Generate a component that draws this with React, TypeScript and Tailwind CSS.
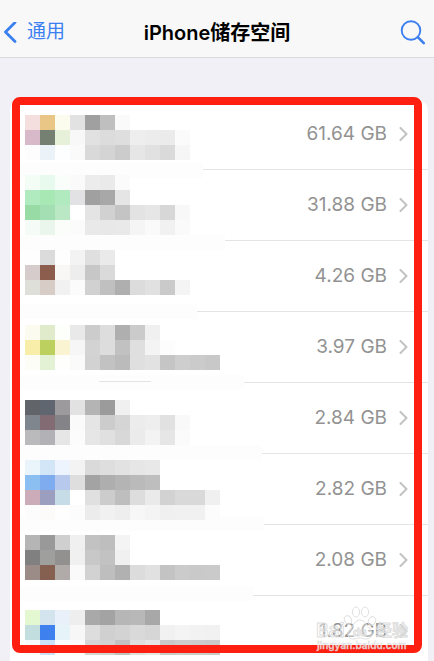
const apps = [
  { id: 1, size: '61.64 GB' },
  { id: 2, size: '31.88 GB' },
  { id: 3, size: '4.26 GB' },
  { id: 4, size: '3.97 GB' },
  { id: 5, size: '2.84 GB' },
  { id: 6, size: '2.82 GB' },
  { id: 7, size: '2.08 GB' },
  { id: 8, size: '1.82 GB' },
]

// size of one mosaic block
const CELL = 15

// line = index of the block line counted from the top of the list
const mosaic = [
  { line: 0, colors: '#f5dede #e9c686 #fbfbee #e2e2e2 #a0a0a0 #bfbfbf #fafafa' },
  { line: 1, colors: '#d8b9ca #758072 #e7f1d9 #f8f8f8 #e1e1e1 #dcdcdc #dedede #eeeeee #ececec #ebebeb #fbfbfb' },
  { line: 2, colors: '#fdfdfd #ebf2f8 #fdfeff #fafafa #d9d9d9 #d4d4d4 #cccccc #e6e6e6 #e1e1e1 #dadada #f6f6f6' },
  { line: 4, colors: '#f4fcf6 #e8f9ee #f9fefa #fafafa #ececec #eaeaea #fbfbfb' },
  { line: 5, colors: '#b0eabf #a7e8b4 #b1eabe #e2e2e4 #a0a0a0 #a8a8a8 #e5e5e5' },
  { line: 6, colors: '#99dba5 #a4deb3 #bbe8c4 #ffffff #e4e4e4 #d1d1d1 #c4c4c4 #e3e3e3 #e6e6e6 #d7d7d7 #f8f8f8' },
  { line: 7, colors: '#f5fbf6 #eaf6ec #fafdfa #fbfbfb #e9e9e9 #e8e8e8 #e9e9e9 #f5f5f5 #fafafa #f1f1f1 #fafafa' },
  { line: 9, colors: '#fefefe #dbdbdb #fefefe #f3f3f3 #dfdfdf #eaeaea' },
  { line: 10, colors: '#d6cccc #8c5c4c #f8f7f5 #ededed #c7c7c7 #dadada' },
  { line: 11, colors: '#dfdfda #d8cdc6 #f1f1f1 #fbfbfb #d1d1d1 #c0c0c0 #afafaf #dcdcdc #e1e1e1 #cacaca #f4f4f4' },
  { line: 14, colors: '#fcfbef #dfebcb #fdfffa #e9e9e9 #cccccc #dddddd #afafaf #cbcbcb #f0f0f0' },
  { line: 15, colors: '#f9eea9 #bbd05e #fbf4d3 #f6f6f6 #d3d3d3 #dddddd #c1c1c1 #dfdfdf #f4f4f4 #fdfdfd' },
  { line: 16, colors: '#fcfdf7 #e3f1d4 #fefefd #fafafa #d2d2d2 #c2c2c2 #bbbbbb #dfdfdf #e2e2e2 #c5c5c5 #cecece #cbcbcb #c8c8c8' },
  { line: 19, colors: '#616468 #5f666f #9d9a9e #e2e2e2 #b4b4b4 #9b9b9b #f0f0f0' },
  { line: 20, colors: '#7f868e #836b74 #848388 #fafafa #e5e5e5 #cccccc #d5d5d5 #ececec #eeeeee #e1e1e1 #f9f9f9' },
  { line: 21, colors: '#bababc #b2b1b6 #e6e6e6 #fcfcfc #e6e6e6 #e0e0e0 #d8d8d8 #ebebeb #f3f3f3 #e6e6e6 #fbfbfb' },
  { line: 23, colors: '#e9f4fb #d2e6f8 #eef4fd #f3f3f3 #dadada #dedede #e2e2e2 #e6e6e6 #e8e8e8' },
  { line: 24, colors: '#8bbff2 #7eacef #b7c9ec #dedede #a3a3a3 #aeaeae #b4b4b4 #bababa #bebebe' },
  { line: 25, colors: '#cbacb8 #9b9ebf #c6dde7 #ffffff #e0e0e0 #cccccc #bebebe #dddddd #eaeaea #d2d2d2 #d9d9d9 #d9d9d9 #f0f0f0' },
  { line: 26, colors: '#fcfcfc #fcfbfa #fefefe #fcfcfc #ececec #f1f1f1 #eeeeee #f7f7f7 #f4f4f4 #f0f0f0 #f1f1f1 #f1f1f1 #fcfcfc' },
  { line: 28, colors: '#b5b5b5 #999999 #cfcfcf #f0f0f0 #c2c2c2 #bebebe #f4f4f4' },
  { line: 29, colors: '#808080 #9f9f9d #92918f #f0f0f0 #c8c8c8 #c2c2c2 #f0f0f0' },
  { line: 30, colors: '#9b8c88 #855f50 #b0aba8 #fafafa #d2d2d2 #bebebe #b1b1b1 #dcdcdc #e1e1e1 #c3c3c3 #cbcbcb #c9c9c9 #cacaca' },
  { line: 33, colors: '#e3f7d0 #d3e4ef #e9f0f9 #eeeeee #a9a9a9 #a3a3a3 #b6b6b6 #b8b8b8 #a8a8a8' },
  { line: 34, colors: '#c3dedf #3d80ee #e6f3f8 #f7f7f7 #dddddd #d0d0d0 #d3d3d3 #d9d9d9 #d6d6d6 #f1f1f1 #f4f4f4 #f2f2f2 #f1f1f1' },
  { line: 35, colors: '#f8fbfc #cbe1f8 #fafcfd #fbfbfb #d5d5d5 #d2d2d2 #c2c2c2 #dfdfdf #e6e6e6 #c9c9c9 #cdcdcd #cccccc #cacaca' },
]

// pale smears that hide the start of each separator
const smears = [
  { y: 64, width: 193 },
  { y: 136, width: 215 },
  { y: 205, width: 187 },
  { y: 276, width: 234 },
  { y: 346, width: 252 },
  { y: 417, width: 254 },
  { y: 487, width: 243 },
]

const Header = () => {
  return (
    <header className="grid h-[58px] grid-cols-[1fr_auto_1fr] items-center border-b border-[#dadbdb] bg-[#f8f8f8] px-1 pt-2">
      <a href="#general" className="flex items-center gap-2.5 text-[19px] text-[#3b7ff0]">
        <svg width="13" height="22" viewBox="0 0 13 22" fill="none" stroke="currentColor" strokeWidth="2.8" strokeLinecap="round" strokeLinejoin="round">
          <path d="M11 .5 1.5 10 11 19.5" />
        </svg>
        通用
      </a>
      <h1 className="text-[20px] font-semibold text-black">iPhone储存空间</h1>
      <button type="button" aria-label="搜索" className="justify-self-end pr-1 text-[#3b7ff0]">
        <svg width="26" height="26" viewBox="0 0 26 26" fill="none" stroke="currentColor" strokeLinecap="round">
          <circle cx="11" cy="10.5" r="9.3" strokeWidth="1.9" />
          <path d="m17.8 17.2 6 6" strokeWidth="2.6" />
        </svg>
      </button>
    </header>
  )
}

const Mosaic = () => {
  return (
    <svg className="pointer-events-none absolute left-0 top-0" width="270" height="560" shapeRendering="crispEdges" aria-hidden="true">
      {smears.map((smear) => (
        <rect key={smear.y} x="0" y={smear.y} width={smear.width} height="15" fill="#fdfdfd" />
      ))}
      <rect x="89" y="282" width="52" height="1" fill="#e4e4e4" />
      {mosaic.map(({ line, colors }) =>
        colors.split(' ').map((color, col) => (
          <rect key={`${line}-${col}`} x={15 + col * CELL} y={16 + line * CELL} width={CELL} height={CELL} fill={color} />
        ))
      )}
    </svg>
  )
}

const Watermark = () => {
  return (
    <svg className="pointer-events-none absolute bottom-2.5 right-4" width="100" height="56" viewBox="0 0 100 56" aria-hidden="true">
      <g fill="#ffffff" fillOpacity="0.35" stroke="#dcdcdc" strokeWidth="0.9">
        <ellipse cx="36" cy="19" rx="3.5" ry="4.5" transform="rotate(-20 36 19)" />
        <ellipse cx="44" cy="11" rx="3.6" ry="5" />
        <ellipse cx="53" cy="11" rx="3.6" ry="5" />
        <ellipse cx="60" cy="20" rx="3.5" ry="4.5" transform="rotate(20 60 20)" />
        <path d="M48 19c5 0 6 5 10 9 4 5 2 10-4 10-3 0-4-1-6-1s-4 1-7 1c-5 0-7-5-3-10 4-4 5-9 10-9Z" />
        <text x="4" y="36" fontSize="19" fontWeight="600">Bai</text>
        <text x="41" y="35" fontSize="11" fontWeight="600">du</text>
        <text x="64" y="35" fontSize="16" fontWeight="500">经验</text>
      </g>
      <text x="5" y="48" fontSize="10" fontWeight="600" fill="#ffffff" fillOpacity="0.8" stroke="#cccccc" strokeWidth="0.3">jingyan.baidu.com</text>
    </svg>
  )
}

export default function App() {
  return (
    <div className="h-screen overflow-hidden bg-[#f1f0f6] font-['Inter','Noto_Sans_CJK_SC',sans-serif]">
      <Header />
      <main className="pl-2.5 pr-1.5 pt-[41px]">
        <div className="relative">
          <ul className="rounded-t-xl bg-white">
            {apps.map((app) => (
              <li key={app.id} className="h-[71px] border-b border-[#e4e4e4]">
                <a href={`#app-${app.id}`} className="flex h-full items-center justify-end gap-3 pr-5 text-[19px] text-[#929292]">
                  {app.size}
                  <svg width="9" height="15" viewBox="0 0 9 15" fill="none" stroke="#c2c2c4" strokeWidth="2" strokeLinecap="round" strokeLinejoin="round">
                    <path d="m1.5 1 6 6-6 6" />
                  </svg>
                </a>
              </li>
            ))}
          </ul>
          <Mosaic />
          {/* highlight frame */}
          <div className="pointer-events-none absolute -top-0.5 bottom-3.5 left-0.5 right-1.5 rounded-lg border-8 border-[#ff1f10]" />
          <Watermark />
        </div>
      </main>
    </div>
  )
}
